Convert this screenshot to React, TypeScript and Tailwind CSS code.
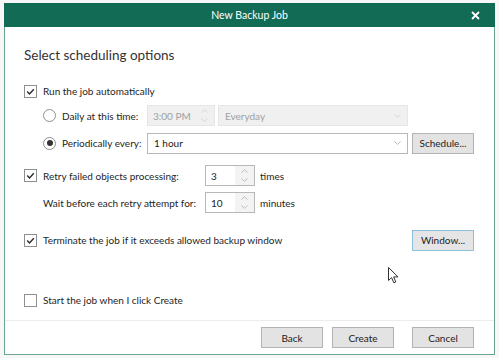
import React from "react";

const Check = () => (
  <svg width="9" height="9" viewBox="0 0 9 9" fill="none">
    <polyline points="1.2,4.6 3.5,6.9 7.8,2.2" stroke="#2b2b2b" strokeWidth="1.4" />
  </svg>
);

function Checkbox({ checked }: { checked?: boolean }) {
  return (
    <div className="w-[13px] h-[13px] border border-[#8f8f8f] bg-white flex items-center justify-center shrink-0">
      {checked ? <Check /> : null}
    </div>
  );
}

function Radio({ checked }: { checked?: boolean }) {
  return (
    <div className="w-[13px] h-[13px] rounded-full border border-[#8f8f8f] bg-white flex items-center justify-center shrink-0">
      {checked ? <div className="w-[6px] h-[6px] rounded-full bg-[#333]" /> : null}
    </div>
  );
}

const ChevUp = ({ c }: { c: string }) => (
  <svg width="7" height="4" viewBox="0 0 7 4" fill="none">
    <polyline points="0.5,3.5 3.5,0.7 6.5,3.5" stroke={c} strokeWidth="1" />
  </svg>
);
const ChevDown = ({ c }: { c: string }) => (
  <svg width="7" height="4" viewBox="0 0 7 4" fill="none">
    <polyline points="0.5,0.5 3.5,3.3 6.5,0.5" stroke={c} strokeWidth="1" />
  </svg>
);

function Spin({ value, disabled, w }: { value: string; disabled?: boolean; w: string }) {
  return (
    <div
      className={`${w} h-[21px] border flex ${
        disabled ? "border-[#e6e6e6] bg-[#f0f0f0] text-[#a0a0a0]" : "border-[#b8b8b8] bg-white text-[#222]"
      }`}
    >
      <div className="flex-1 flex items-center pl-[5px]">{value}</div>
      <div className={`w-[19px] flex flex-col items-center justify-center gap-[5px] ${disabled ? "" : "bg-[#f3f3f3]"}`}>
        <ChevUp c={disabled ? "#d6d6d6" : "#bdbdbd"} />
        <ChevDown c={disabled ? "#d6d6d6" : "#bdbdbd"} />
      </div>
    </div>
  );
}

function Select({ value, disabled, w }: { value: string; disabled?: boolean; w: string }) {
  return (
    <div
      className={`${w} h-[21px] border flex items-center ${
        disabled ? "border-[#e6e6e6] bg-[#f0f0f0] text-[#a0a0a0]" : "border-[#b8b8b8] bg-white text-[#222]"
      }`}
    >
      <div className="flex-1 pl-[6px]">{value}</div>
      <div className="w-[19px] flex items-center justify-center">
        <ChevDown c={disabled ? "#d6d6d6" : "#b5b5b5"} />
      </div>
    </div>
  );
}

function Btn({ label, focus, w = "w-[62px]" }: { label: string; focus?: boolean; w?: string }) {
  return (
    <div
      className={`${w} h-[21px] border flex items-center justify-center text-[#222] ${
        focus ? "border-[#8cc0dc] bg-[#e5e5e5]" : "border-[#b3b3b3] bg-[#e3e3e3]"
      }`}
    >
      {label}
    </div>
  );
}

export default function App() {
  return (
    <div className="w-[499px] h-[358px] bg-[#f7f7f7] pt-[3px] pl-[4px] font-['Lato',sans-serif] text-[10px] leading-none text-[#252525] whitespace-nowrap relative overflow-hidden">
      <div className="w-[491px] h-[352px] bg-white border-x border-b border-[#6aa593] flex flex-col">
        {/* title bar */}
        <div className="h-[24px] -mx-px bg-[#116b55] flex items-center justify-center relative shrink-0">
          <span className="text-white text-[10.5px]">New Backup Job</span>
          <svg className="absolute right-[15px] top-[8px]" width="9" height="9" viewBox="0 0 9 9">
            <path d="M1 1 L8 8 M8 1 L1 8" stroke="white" strokeWidth="1.8" />
          </svg>
        </div>

        {/* content */}
        <div className="flex-1 flex flex-col pl-[19px]">
          <div className="mt-[19px] h-[20px] flex items-center text-[13.5px] text-[#333]">Select scheduling options</div>

          <div className="mt-[15px] h-[20px] flex items-center gap-[6px]">
            <Checkbox checked />
            <span>Run the job automatically</span>
          </div>

          <div className="mt-[4px] h-[21px] flex items-center pl-[19px]">
            <div className="w-[104px] flex items-center gap-[6px]">
              <Radio />
              <span>Daily at this time:</span>
            </div>
            <Spin value="3:00 PM" disabled w="w-[68px]" />
            <div className="w-[3px]" />
            <Select value="Everyday" disabled w="w-[190px]" />
          </div>

          <div className="mt-[6px] h-[22px] flex items-center pl-[19px]">
            <div className="w-[104px] flex items-center gap-[6px]">
              <Radio checked />
              <span>Periodically every:</span>
            </div>
            <Select value="1 hour" w="w-[261px]" />
            <div className="w-[4px]" />
            <Btn label="Schedule..." />
          </div>

          <div className="mt-[11px] h-[21px] flex items-center">
            <div className="w-[181px] flex items-center gap-[6px]">
              <Checkbox checked />
              <span>Retry failed objects processing:</span>
            </div>
            <Spin value="3" w="w-[50px]" />
            <span className="ml-[5px]">times</span>
          </div>

          <div className="mt-[6px] h-[21px] flex items-center">
            <div className="w-[181px] pl-[19px]">Wait before each retry attempt for:</div>
            <Spin value="10" w="w-[50px]" />
            <span className="ml-[5px]">minutes</span>
          </div>

          <div className="mt-[16px] h-[22px] flex items-center">
            <div className="w-[388px] flex items-center gap-[6px]">
              <Checkbox checked />
              <span>Terminate the job if it exceeds allowed backup window</span>
            </div>
            <Btn label="Window..." focus />
          </div>

          <div className="mt-[39px] h-[20px] flex items-center gap-[6px]">
            <Checkbox />
            <span>Start the job when I click Create</span>
          </div>
        </div>

        {/* footer */}
        <div className="h-[34px] border-t border-[#ececec] flex items-start pt-[6px] pl-[256px] shrink-0">
          <Btn label="Back" />
          <div className="w-[9px]" />
          <Btn label="Create" />
          <div className="w-[18px]" />
          <Btn label="Cancel" />
        </div>
      </div>

      {/* mouse cursor */}
      <svg className="absolute left-[388px] top-[267px]" width="11" height="17" viewBox="0 0 11 17">
        <path d="M0.5 0.5 L0.5 13.5 L3.6 10.6 L5.8 15.8 L7.8 15 L5.7 9.9 L10 9.9 Z" fill="white" stroke="#333" strokeWidth="1" strokeLinejoin="round" />
      </svg>
    </div>
  );
}
